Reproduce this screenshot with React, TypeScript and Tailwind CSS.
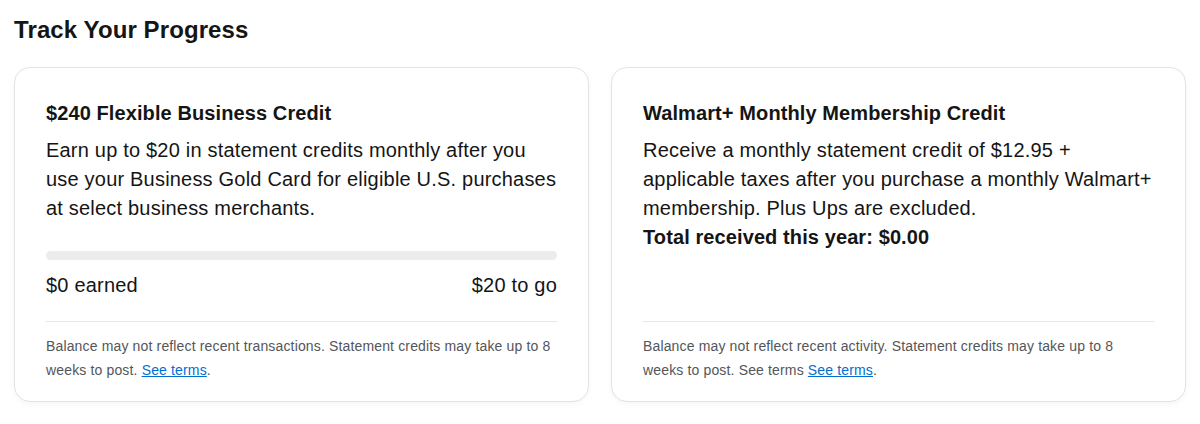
const font = { fontFamily: '"Liberation Sans", Arial, sans-serif' };

function Footer({ text, lead }: { text: string; lead?: string }) {
  return (
    <div className="mt-auto border-t border-[#e6e6e6] pt-[12px] text-[14px] leading-[24px] tracking-[0.15px] text-[#53565a]">
      {text}
      {lead}
      <a href="#" className="text-[#006fcf] underline">
        See terms
      </a>
      .
    </div>
  );
}

function Card({ children }: { children: React.ReactNode }) {
  return (
    <div className="flex h-[335px] flex-1 flex-col rounded-[16px] border border-[#e3e3e3] bg-white px-[31px] pt-[31px] pb-[19px] shadow-[0_2px_6px_rgba(0,0,0,0.04)]">
      {children}
    </div>
  );
}

export default function App() {
  return (
    <div className="min-h-[424px] bg-white text-[#151515]" style={font}>
      <div className="px-[14px] pt-[14px]">
        <h2 className="text-[24px] font-bold leading-[32px] tracking-[0.1px]">Track Your Progress</h2>
        <div className="mt-[21px] flex gap-[22px]">
          <Card>
            <h3 className="text-[20px] font-bold leading-[28px] tracking-[0.1px]">$240 Flexible Business Credit</h3>
            <p className="mt-[9px] text-[20px] leading-[29px] tracking-[0.2px]">
              Earn up to $20 in statement credits monthly after you use your Business Gold Card for eligible U.S. purchases at select business merchants.
            </p>
            <div className="mt-[28px] h-[9px] w-full rounded-full bg-[#ececec]" />
            <div className="mt-[11px] flex justify-between text-[20px] leading-[29px] tracking-[0.2px]">
              <span>$0 earned</span>
              <span>$20 to go</span>
            </div>
            <div className="h-[19px]" />
            <Footer text="Balance may not reflect recent transactions. Statement credits may take up to 8 weeks to post. " />
          </Card>
          <Card>
            <h3 className="text-[20px] font-bold leading-[28px] tracking-[0.1px]">Walmart+ Monthly Membership Credit</h3>
            <p className="mt-[9px] text-[20px] leading-[29px] tracking-[0.2px]">
              Receive a monthly statement credit of $12.95 + applicable taxes after you purchase a monthly Walmart+ membership. Plus Ups are excluded.
            </p>
            <p className="text-[20px] font-bold leading-[28px] tracking-[0.1px]">Total received this year: $0.00</p>
            <Footer text="Balance may not reflect recent activity. Statement credits may take up to 8 weeks to post. " lead="See terms " />
          </Card>
        </div>
      </div>
    </div>
  );
}
